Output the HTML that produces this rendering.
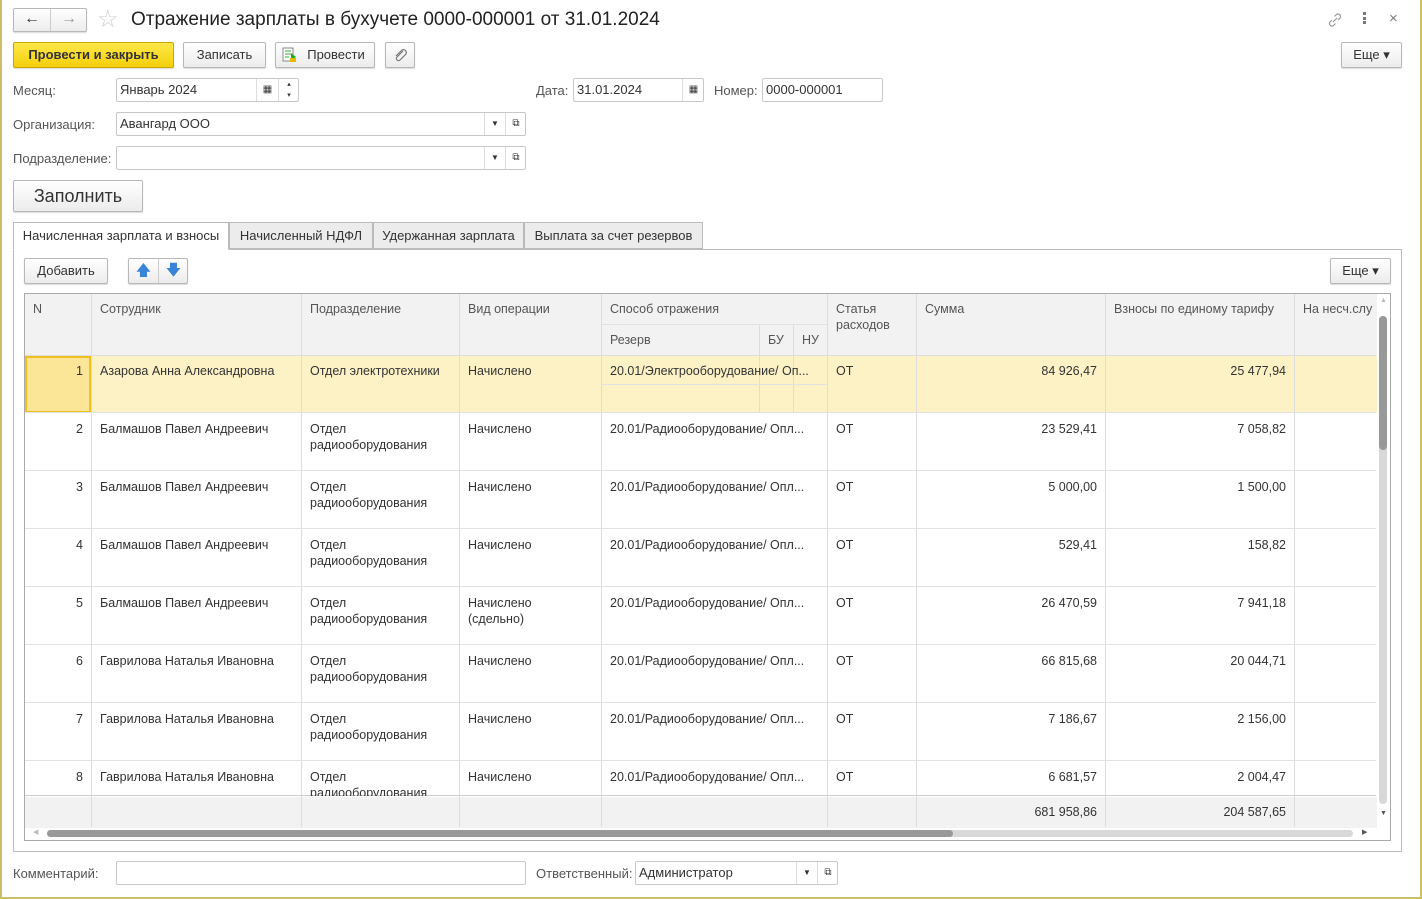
<!DOCTYPE html>
<html><head><meta charset="utf-8"><style>
*{box-sizing:border-box}
body{margin:0;width:1422px;height:899px;position:relative;background:#fff;font-family:"Liberation Sans",Arial,sans-serif;font-size:12.5px;color:#333;overflow:hidden}
.a{position:absolute}
.frame{position:absolute;left:0;top:0;width:1422px;height:899px;border:2px solid #cdbf6a;border-top:none}
.btn{position:absolute;border:1px solid #b8b8b8;border-radius:2px;background:linear-gradient(#fff,#ececec);box-shadow:0 1px 1px rgba(0,0,0,.15);text-align:center;color:#333;line-height:24px;font-size:13px}
.inp{position:absolute;border:1px solid #c8c8c8;border-radius:2px;background:#fff;height:24px;line-height:22px;padding-left:3px;font-size:13px;color:#333}
.lbl{position:absolute;color:#555;font-size:13px}
.sep{position:absolute;top:0;bottom:0;border-left:1px solid #ddd}
.tab{position:absolute;top:222px;height:27px;border:1px solid #bbb;background:#ececec;line-height:26px;text-align:center;font-size:13px}
.v{position:absolute;width:1px;background:#ddd}
.h{position:absolute;height:1px;background:#e2e2e2}
.t{position:absolute;font-size:12.5px;line-height:16px;color:#333;white-space:nowrap}
.r{text-align:right}
</style></head><body>
<div class="frame"></div>
<!-- title bar -->
<div class="btn" style="left:13px;top:8px;width:74px;height:24px;line-height:20px"><span style="position:absolute;left:0;width:37px;border-right:1px solid #ccc;height:22px;font-size:16px">&#8592;</span><span style="position:absolute;left:37px;width:36px;color:#999;font-size:16px">&#8594;</span></div>
<div class="a" style="left:97px;top:5px;font-size:24px;color:#ccc">&#9734;</div>
<div class="a" style="left:131px;top:9px;font-size:19px;color:#222">Отражение зарплаты в бухучете 0000-000001 от 31.01.2024</div>
<svg class="a" style="left:1326px;top:11px" width="18" height="18" viewBox="0 0 18 18"><path d="M7 11l4-4M6 9l-2 2a2.5 2.5 0 0 0 3.5 3.5l2-2M12 9l2-2a2.5 2.5 0 0 0-3.5-3.5l-2 2" stroke="#999" fill="none" stroke-width="1.2"/></svg>
<div class="a" style="left:1363px;top:12px;width:3px"><div style="width:3px;height:3px;background:#777;margin-bottom:1.5px"></div><div style="width:3px;height:3px;background:#777;margin-bottom:1.5px"></div><div style="width:3px;height:3px;background:#777"></div></div>
<div class="a" style="left:1389px;top:10px;font-size:15px;color:#777">×</div>
<!-- command bar -->
<div class="btn" style="left:13px;top:42px;width:161px;height:26px;background:linear-gradient(#ffe84a,#f4cf0a);border-color:#c9a800;font-weight:bold;color:#333">Провести и закрыть</div>
<div class="btn" style="left:183px;top:42px;width:83px;height:26px">Записать</div>
<div class="btn" style="left:275px;top:42px;width:100px;height:26px;padding-left:22px">Провести<svg class="a" style="left:6px;top:4px" width="16" height="16"><rect x="1" y="1" width="10" height="13" fill="#fff" stroke="#888"/><path d="M3 4h6M3 7h6M3 10h4" stroke="#3a3"/><path d="M9 6l5 4-5 4z" fill="#2a2"/><rect x="8" y="11" width="6" height="4" fill="#e6b800"/></svg></div>
<div class="btn" style="left:385px;top:42px;width:30px;height:26px"><svg class="a" style="left:7px;top:5px" width="15" height="15"><path d="M10 3L4 9a2 2 0 0 0 3 3l6-6a3 3 0 0 0-4-4L3 8" stroke="#777" fill="none" stroke-width="1.2"/></svg></div>
<div class="btn" style="left:1341px;top:42px;width:61px;height:26px">Еще ▾</div>
<!-- fields -->
<div class="lbl" style="left:13px;top:83px">Месяц:</div>
<div class="inp" style="left:116px;top:78px;width:183px">Январь 2024<span class="a" style="left:139px;top:0;height:22px;border-left:1px solid #ddd;width:22px;text-align:center;font-size:10px">▦</span><span class="a" style="left:161px;top:0;height:22px;border-left:1px solid #ddd;width:21px;text-align:center;font-size:7px;line-height:11px">▴<br>▾</span></div>
<div class="lbl" style="left:536px;top:83px">Дата:</div>
<div class="inp" style="left:573px;top:78px;width:131px">31.01.2024<span class="a" style="left:108px;top:0;height:22px;border-left:1px solid #ddd;width:22px;text-align:center;font-size:10px">▦</span></div>
<div class="lbl" style="left:714px;top:83px">Номер:</div>
<div class="inp" style="left:762px;top:78px;width:121px">0000-000001</div>
<div class="lbl" style="left:13px;top:117px">Организация:</div>
<div class="inp" style="left:116px;top:112px;width:410px">Авангард ООО<span class="a" style="left:367px;top:0;height:22px;border-left:1px solid #ddd;width:21px;text-align:center;font-size:8px">▼</span><span class="a" style="left:388px;top:0;height:22px;border-left:1px solid #ddd;width:21px;text-align:center;font-size:10px">⧉</span></div>
<div class="lbl" style="left:13px;top:151px">Подразделение:</div>
<div class="inp" style="left:116px;top:146px;width:410px"><span class="a" style="left:367px;top:0;height:22px;border-left:1px solid #ddd;width:21px;text-align:center;font-size:8px">▼</span><span class="a" style="left:388px;top:0;height:22px;border-left:1px solid #ddd;width:21px;text-align:center;font-size:10px">⧉</span></div>
<div class="btn" style="left:13px;top:180px;width:130px;height:32px;line-height:30px;font-size:18px">Заполнить</div>
<!-- tabs -->
<div class="a" style="left:13px;top:249px;width:1389px;height:603px;border:1px solid #bbb"></div>
<div class="tab" style="left:13px;width:216px;background:#fff;border-bottom:1px solid #fff;height:28px">Начисленная зарплата и взносы</div>
<div class="tab" style="left:229px;width:144px">Начисленный НДФЛ</div>
<div class="tab" style="left:373px;width:151px">Удержанная зарплата</div>
<div class="tab" style="left:524px;width:179px">Выплата за счет резервов</div>
<div class="btn" style="left:24px;top:258px;width:84px;height:26px">Добавить</div>
<div class="btn" style="left:128px;top:258px;width:60px;height:26px;color:#3a84d8;font-size:15px"><span class="a" style="left:0;width:30px;border-right:1px solid #ccc">🡅</span><span class="a" style="left:30px;width:29px">🡇</span></div>
<div class="btn" style="left:1330px;top:258px;width:61px;height:26px">Еще ▾</div>
<!-- table -->
<div class="a" style="left:24px;top:293px;width:1367px;height:548px;border:1px solid #aaa;overflow:hidden">
 <div class="a" style="left:0;top:0;width:1352px;height:62px;background:#f2f2f2"></div>
 <div class="a" style="left:0;top:62px;width:1352px;height:57px;background:#fdf2c6"></div>
 <div class="a" style="left:0;top:62px;width:66px;height:57px;background:#fbe597;border:2px solid #f0c020"></div>
 <div class="a" style="left:0;top:503px;width:1352px;height:31px;background:#f2f2f2"></div>
</div>
<div class="a" style="left:25px;top:294px;width:1351px;height:533px">
 <div class="v" style="left:66px;top:0;height:533px"></div>
 <div class="v" style="left:276px;top:0;height:533px"></div>
 <div class="v" style="left:434px;top:0;height:533px"></div>
 <div class="v" style="left:576px;top:0;height:533px"></div>
 <div class="v" style="left:734px;top:30px;height:88px"></div>
 <div class="v" style="left:768px;top:30px;height:88px"></div>
 <div class="v" style="left:802px;top:0;height:533px"></div>
 <div class="v" style="left:891px;top:0;height:533px"></div>
 <div class="v" style="left:1080px;top:0;height:533px"></div>
 <div class="v" style="left:1269px;top:0;height:533px"></div>
 <div class="h" style="left:577px;top:30px;width:225px"></div>
 <div class="h" style="left:577px;top:90px;width:225px"></div>
 <div class="h" style="left:0;top:61px;width:1351px;background:#ddd"></div>
 <div class="h" style="left:0;top:118px;width:1351px"></div>
 <div class="h" style="left:0;top:176px;width:1351px"></div>
 <div class="h" style="left:0;top:234px;width:1351px"></div>
 <div class="h" style="left:0;top:292px;width:1351px"></div>
 <div class="h" style="left:0;top:350px;width:1351px"></div>
 <div class="h" style="left:0;top:408px;width:1351px"></div>
 <div class="h" style="left:0;top:466px;width:1351px"></div>
 <div class="h" style="left:0;top:501px;width:1351px;background:#ccc"></div>
 <div class="t" style="left:8px;top:7px;color:#555">N</div>
 <div class="t" style="left:75px;top:7px;color:#555">Сотрудник</div>
 <div class="t" style="left:285px;top:7px;color:#555">Подразделение</div>
 <div class="t" style="left:443px;top:7px;color:#555">Вид операции</div>
 <div class="t" style="left:585px;top:7px;color:#555">Способ отражения</div>
 <div class="t" style="left:585px;top:38px;color:#555">Резерв</div>
 <div class="t" style="left:743px;top:38px;color:#555">БУ</div>
 <div class="t" style="left:777px;top:38px;color:#555">НУ</div>
 <div class="t" style="left:811px;top:7px;color:#555">Статья<br>расходов</div>
 <div class="t" style="left:900px;top:7px;color:#555">Сумма</div>
 <div class="t" style="left:1089px;top:7px;color:#555">Взносы по единому тарифу</div>
 <div class="t" style="left:1278px;top:7px;color:#555">На несч.слу</div>
</div>
<div class="a" style="left:25px;top:294px;width:1351px;height:502px;overflow:hidden">
<div id="rows"></div>
</div>
<script>
var d=[["1","Азарова Анна Александровна","Отдел электротехники","Начислено","20.01/Электрооборудование/ Оп...","84 926,47","25 477,94"],
["2","Балмашов Павел Андреевич","Отдел<br>радиооборудования","Начислено","20.01/Радиооборудование/ Опл...","23 529,41","7 058,82"],
["3","Балмашов Павел Андреевич","Отдел<br>радиооборудования","Начислено","20.01/Радиооборудование/ Опл...","5 000,00","1 500,00"],
["4","Балмашов Павел Андреевич","Отдел<br>радиооборудования","Начислено","20.01/Радиооборудование/ Опл...","529,41","158,82"],
["5","Балмашов Павел Андреевич","Отдел<br>радиооборудования","Начислено<br>(сдельно)","20.01/Радиооборудование/ Опл...","26 470,59","7 941,18"],
["6","Гаврилова Наталья Ивановна","Отдел<br>радиооборудования","Начислено","20.01/Радиооборудование/ Опл...","66 815,68","20 044,71"],
["7","Гаврилова Наталья Ивановна","Отдел<br>радиооборудования","Начислено","20.01/Радиооборудование/ Опл...","7 186,67","2 156,00"],
["8","Гаврилова Наталья Ивановна","Отдел<br>радиооборудования","Начислено","20.01/Радиооборудование/ Опл...","6 681,57","2 004,47"]];
var h="";d.forEach(function(r,i){var y=(i==0?69:69+58*i);
h+='<div class="t r" style="left:0;width:58px;top:'+y+'px">'+r[0]+'</div><div class="t" style="left:75px;top:'+y+'px">'+r[1]+'</div><div class="t" style="left:285px;top:'+y+'px">'+r[2]+'</div><div class="t" style="left:443px;top:'+y+'px">'+r[3]+'</div><div class="t" style="left:585px;top:'+y+'px">'+r[4]+'</div><div class="t" style="left:811px;top:'+y+'px">ОТ</div><div class="t r" style="left:891px;width:181px;top:'+y+'px">'+r[5]+'</div><div class="t r" style="left:1080px;width:181px;top:'+y+'px">'+r[6]+'</div>';});
document.getElementById("rows").innerHTML=h;
</script>
<div class="t r" style="left:916px;width:181px;top:804px">681 958,86</div>
<div class="t r" style="left:1105px;width:181px;top:804px">204 587,65</div>
<!-- scrollbars -->
<div class="a" style="left:1379px;top:316px;width:8px;height:488px;background:#d8d8d8;border-radius:4px"></div>
<div class="a" style="left:1379px;top:316px;width:8px;height:134px;background:#999;border-radius:4px"></div>
<div class="a" style="left:1380px;top:297px;font-size:7px;color:#bbb">▲</div>
<div class="a" style="left:1380px;top:810px;font-size:7px;color:#555">▼</div>
<div class="a" style="left:47px;top:830px;width:1306px;height:7px;background:#d8d8d8;border-radius:4px"></div>
<div class="a" style="left:47px;top:830px;width:906px;height:7px;background:#999;border-radius:4px"></div>
<div class="a" style="left:33px;top:828px;font-size:7px;color:#bbb">◀</div>
<div class="a" style="left:1362px;top:828px;font-size:7px;color:#555">▶</div>
<!-- footer -->
<div class="lbl" style="left:13px;top:866px">Комментарий:</div>
<div class="inp" style="left:116px;top:861px;width:410px"></div>
<div class="lbl" style="left:536px;top:866px">Ответственный:</div>
<div class="inp" style="left:635px;top:861px;width:203px">Администратор<span class="a" style="left:160px;top:0;height:22px;border-left:1px solid #ddd;width:21px;text-align:center;font-size:8px">▼</span><span class="a" style="left:181px;top:0;height:22px;border-left:1px solid #ddd;width:21px;text-align:center;font-size:10px">⧉</span></div>
</body></html>
